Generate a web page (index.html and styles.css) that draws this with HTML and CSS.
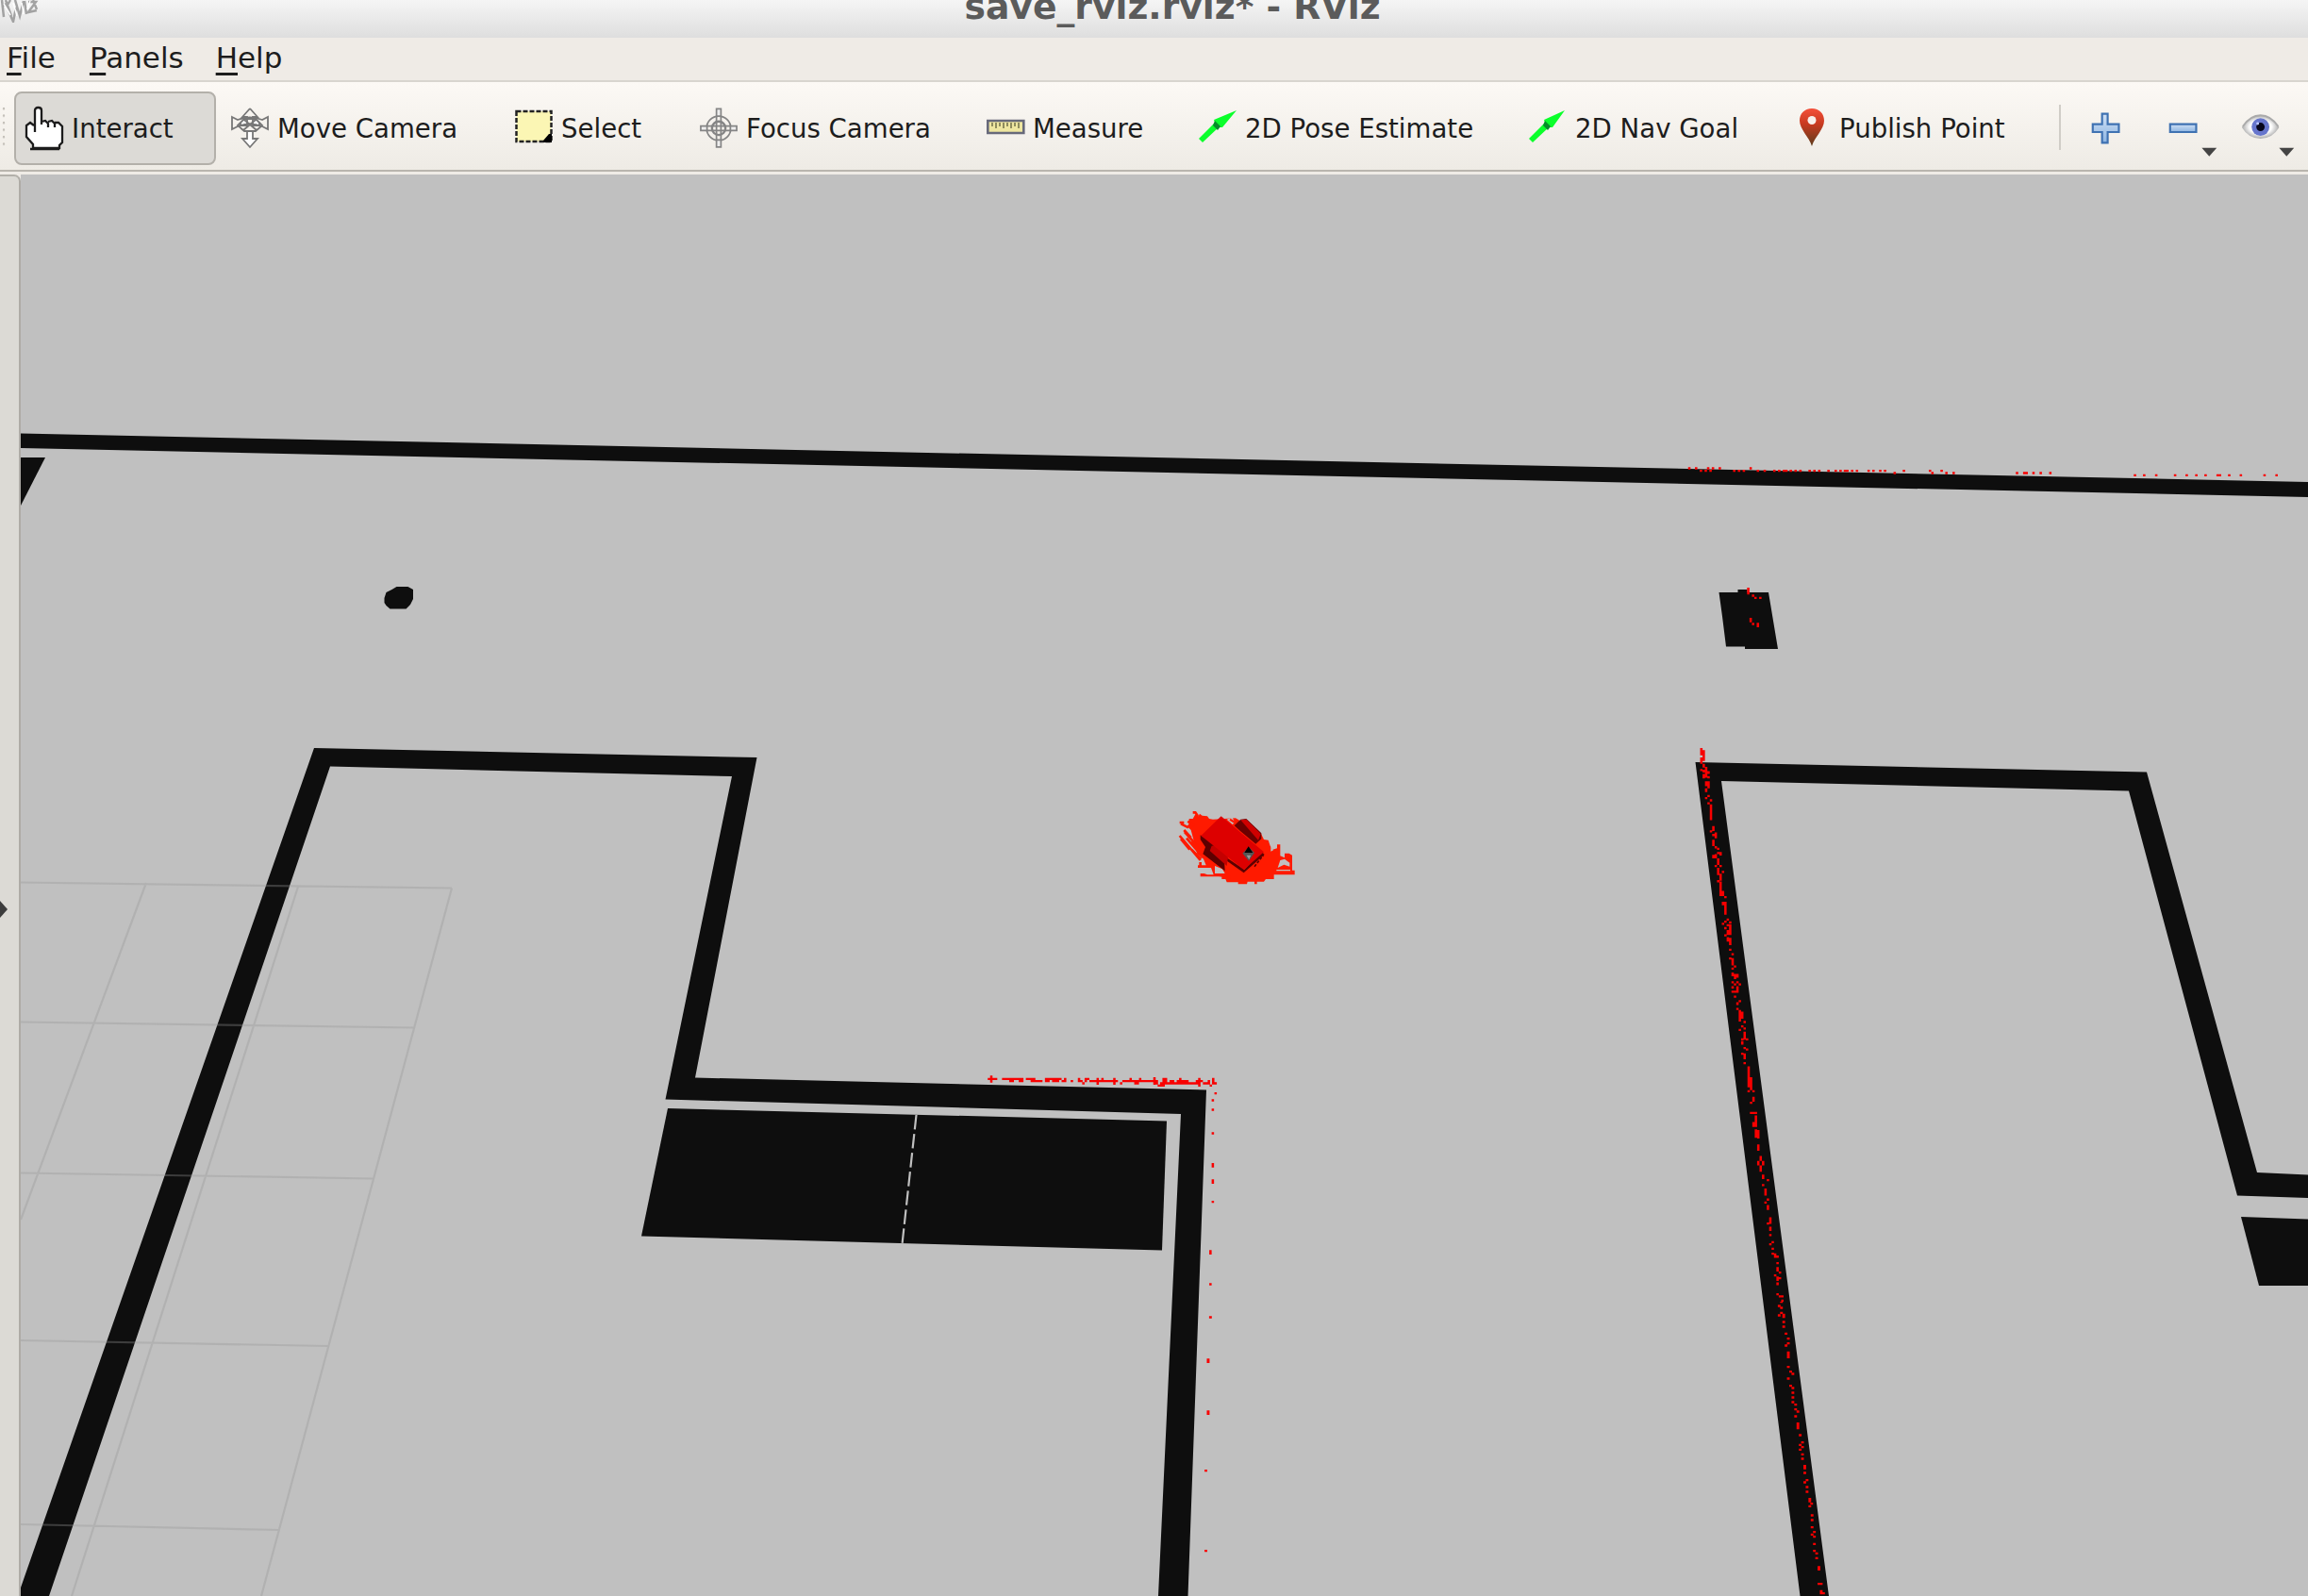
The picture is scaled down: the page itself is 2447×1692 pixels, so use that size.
FILE: index.html
```html
<!DOCTYPE html>
<html lang="en">
<head>
<meta charset="utf-8">
<title>save_rviz.rviz* - RViz</title>
<link rel="stylesheet" href="styles.css">
</head>
<body>
<div class="window">
  <header class="titlebar">
    <svg class="app-icon" width="44" height="24" viewBox="0 0 44 24" fill="none" stroke="#a2a2a2" stroke-width="2.500">
      <path d="M2 0l2 18M6 0l6 17M2 7l6-4M11 0l-4 7 7 16 3-15M16 0l5 17 4-16M26 1l2 14M30 2h8l-8 11 9-2M35 0l4 10"/>
      <path stroke="#fff" stroke-width="1.500" d="M4 4l7 12M14 3l4 14M23 3l2 12M32 1l-3 9"/>
    </svg>
    <h1 class="title">save_rviz.rviz* - RViz</h1>
  </header>

  <nav class="menubar">
    <span class="menu"><span class="key">F</span>ile</span>
    <span class="menu"><span class="key">P</span>anels</span>
    <span class="menu"><span class="key">H</span>elp</span>
  </nav>

  <div class="toolbar">
    <div class="grip"></div>
    <div class="tools">
      <div class="tool active">
        <svg class="icon" viewBox="0 0 40 44"><path d="M9 4q0-3 4-3t4 3v13l3-2q3-1 4 2l3-2q3-1 4 3 3-2 5 0l3 3v17l-3 4v3H9v-4l-7-8V19l3-2 4 2z" fill="#fff"/><path d="M10 27V4q0-3 3.500-3T17 4v15M17 16l4-1 3 3v4M24 16l4-1 3 3v4M31 17l4 0 4 4v17l-3 3v3H8v-4l-7-8V20l4-3 4 3M5 45h31" fill="none" stroke="#1c1c1c" stroke-width="2.300"/></svg>
        <span>Interact</span>
      </div>
      <div class="tool">
        <svg class="icon" viewBox="0 0 40 44"><g fill="#fff" stroke="#777" stroke-width="1.800"><path d="M20 2l8 9h-5v9h7v-3M20 2l-8 9h5v9h-7v-3M17 25v9h-5l8 9 8-9h-5v-9"/><path d="M1 11l6 3q13-5 26 0l6-3v13l-6-3q-13-5-26 0l-6 3z" fill="none"/><path d="M7 20l7-7h12l7 7-7 6H14zM14 14l13 11M26 14L13 25" fill="none"/></g></svg>
        <span>Move Camera</span>
      </div>
      <div class="tool">
        <svg class="icon" viewBox="0 0 40 44"><path d="M1.500 5h37v32h-37z" fill="#fbf6b4" stroke="#222" stroke-width="2.500" stroke-dasharray="5 2"/><path d="M39 29v9h-9v-2l6-7z" fill="#000"/></svg>
        <span>Select</span>
      </div>
      <div class="tool">
        <svg class="icon" viewBox="0 0 42 44"><g fill="none" stroke="#858585" stroke-width="1.800"><circle cx="21" cy="23" r="13.500"/><circle cx="21" cy="23" r="7.500" stroke-width="2.500"/><path d="M18.500 1.500h5v8h-5zM18.500 36h5v8h-5zM1 20.500h7v5H1zM34 20.500h7v5h-7z" fill="#eee"/><path d="M18.500 10v26M23.500 10v26M8 20.500h26M8 25.500h26"/></g></svg>
        <span>Focus Camera</span>
      </div>
      <div class="tool">
        <svg class="icon" viewBox="0 0 40 44"><path d="M1.300 15h38v13h-38z" fill="#eee6a0" stroke="#67697a" stroke-width="2.600"/><path d="M6 17v4M10 17v6M14 17v4M18 17v6M22 17v4M26 17v6M30 17v4M34 17v6" stroke="#77764f" stroke-width="1.600"/></svg>
        <span>Measure</span>
      </div>
      <div class="tool">
        <svg class="icon" viewBox="0 0 40 44"><path d="M0 34l17-17-1-3L40 4 25 22l-4 0L4 38z" fill="#0bff2b"/><path d="M15 20l2-5 6 6-3 4z" fill="#078b2a"/></svg>
        <span>2D Pose Estimate</span>
      </div>
      <div class="tool">
        <svg class="icon" viewBox="0 0 40 44"><path d="M0 34l17-17-1-3L38 4 25 22l-4 0L4 38z" fill="#0bff2b"/><path d="M15 20l2-5 6 6-3 4z" fill="#078b2a"/></svg>
        <span>2D Nav Goal</span>
      </div>
      <div class="tool">
        <svg class="icon" viewBox="0 0 40 44"><defs><linearGradient id="pin" x2="0" y2="1"><stop offset="0" stop-color="#f4503a"/><stop offset=".4" stop-color="#c93a20"/><stop offset="1" stop-color="#5d3c1c"/></linearGradient></defs><path d="M20 2C12 2 7 7.500 7 15c0 9 10 17 13 27 3-10 13-18 13-27C33 7.500 28 2 20 2z" fill="url(#pin)"/><circle cx="20" cy="14.500" r="4.500" fill="#f7f0ec"/></svg>
        <span>Publish Point</span>
      </div>
    </div>
    <div class="separator"></div>
    <div class="actions">
      <svg class="action" viewBox="0 0 84 60"><defs><linearGradient id="blue" x2="0" y2="1"><stop offset="0" stop-color="#cfe0f4"/><stop offset="1" stop-color="#8db5e2"/></linearGradient></defs><path d="M28 12.500h6v11h12v8.500H34v11.500h-6V32H18v-8.500h10z" fill="url(#blue)" stroke="#3f72b2" stroke-width="2.200"/></svg>
      <svg class="action" viewBox="0 0 84 60"><path d="M17 23.500h28v8.500H17z" fill="url(#blue)" stroke="#3f72b2" stroke-width="2.200"/><path d="M51 49h16l-8 9z" fill="#444"/></svg>
      <svg class="action" viewBox="0 0 84 60"><defs><radialGradient id="lid"><stop offset=".6" stop-color="#fbfbfb"/><stop offset="1" stop-color="#aaa"/></radialGradient></defs><path d="M10 27q8-13 20-13t20 13q-7 12-20 12T10 27z" fill="url(#lid)"/><path d="M11 26q8-12 19-12t19 12" fill="none" stroke="#aaa" stroke-width="2"/><circle cx="30" cy="26.500" r="9.500" fill="#6675cc"/><circle cx="30" cy="26.500" r="4.500" fill="#06061c"/><circle cx="27" cy="23" r="1.500" fill="#bfc9ff"/><path d="M50 49h16l-8 9z" fill="#444"/></svg>
    </div>
  </div>

  <main class="workspace">
    <aside class="dock-handle"><div class="dock-arrow"></div></aside>
    <svg class="scene" viewBox="22 185 2425 1507" preserveAspectRatio="none">
      <!-- occupancy map -->
      <g fill="#0e0e0e">
        <path d="M22 459.500L2447 511V527L22 475z"/>
        <path d="M22 485h26L22 536z"/>
        <path d="M407.500 634l2-6 6-3 5-3h12l5.500 3v10l-3 6-4.500 4.500h-17l-4-3.500-2-3z"/>
        <path d="M1822.500 628h20v-3h10v3h22.500l10 60h-35v-2.500h-20l-4-32z"/>
        <path fill-rule="evenodd" d="M333 793L802.500 803 737 1142.500 1279 1155.500 1259.500 1692H1228L1252 1181 705.500 1165.500 776 823 350 812.500 52 1692H22V1683z"/>
        <path d="M708 1175L1237 1188.500 1232 1325.500 680 1310.500z"/>
        <path d="M1797.500 808L2276 818.500 2393 1243 2447 1245.500V1270L2372 1267.500 2257 838.500 1825 828 1939 1692H1908.500z"/>
        <path d="M2376 1290L2447 1292.500V1363H2395z"/>
      </g>
      <path d="M971.500 1182L956.500 1319" stroke="#c0c0c0" stroke-width="2.200" stroke-dasharray="15.500 4.700"/>

      <!-- ground grid -->
      <path class="grid" d="M22 935.500L479 941.500M22 1083.500L439 1089.500M22 1243.500L396 1249.500M22 1421L348 1427M22 1616L296 1622M155 936L22 1293M316 940L76 1692M479 941.500L277 1692"/>

      <!-- laser scan: north wall and pillar -->
      <g class="scan" transform="translate(1780 480) scale(.4253 .3333)">
        <path d="M26 46v7M43 46v7M73 46v7M85 46v7M102 46v7M179 46v7M55 54v7M67 54v7M79 54v7M138 54v7M150 54v7M162 54v7M197 54v7M214 54v7M238 54v7M250 54v7M262 54v7M268 54v7M279 54v7M291 54v7M303 54v7M326 54v7M338 54v7M350 54v7M373 54v7M391 54v7M403 54v7M414 54v7M420 54v7M432 54v7M444 54v7M473 54v7M485 54v7M502 54v7M514 54v7M561 54v7M626 54v7M655 54v7M538 61v7M632 61v7M667 61v7M685 61v7M843 61v7M861 61v7M867 61v7M884 61v7M902 61v7M926 61v7M1137 68v7M1160 68v7M1190 68v7M1237 68v7M1266 68v7M1290 68v7M1313 68v7M1343 68v7M1349 68v7M1372 68v7M1401 68v7M1460 68v7M1490 68v7"/>
        <path d="M173 429v22M185 451v7M191 458v7M203 458v7M179 525v14M185 541v7M197 541v14"/>
      </g>
      <!-- laser scan: inner corner -->
      <g class="scan" transform="translate(660 1120) scale(.4209 .3333)">
        <path d="M929 61v22M941 68v7M935 68v7M923 68v7M959 68v7M965 68v7M971 68v7M977 68v14M983 68v14M989 68v7M995 68v7M1001 68v14M1007 68v14M1019 68v7M1025 68v7M1031 68v14M1037 68v14M1043 75v7M1049 75v7M1055 75v7M1067 68v14M1073 68v14M1079 68v7M1085 68v14M1091 68v14M1097 68v14M1103 68v7M1109 75v7M1115 68v14M1132 75v7M1150 68v14M1156 75v7M1161 82v7M1167 68v14M1173 68v7M1179 75v7M1185 75v7M1191 75v7M1197 68v22M1203 75v7M1209 68v14M1215 75v7M1221 75v7M1227 75v7M1233 75v7M1239 68v22M1245 75v7M1256 82v7M1262 75v7M1268 75v7M1274 75v7M1280 68v14M1286 75v7M1292 75v14M1298 75v14M1304 68v14M1310 75v7M1316 75v7M1322 75v7M1328 75v7M1334 75v7M1340 66v24M1346 75v14M1351 89v7M1357 82v14M1363 68v28M1369 68v14M1369 82v7M1375 82v7M1381 75v14M1387 75v14M1393 82v7M1399 75v14M1405 68v21M1411 75v14M1417 75v14M1423 75v14M1429 82v7M1435 82v7M1441 82v7M1447 75v14M1453 68v28M1459 75v7M1465 82v7M1471 82v7M1477 75v14M1482 89v7M1488 68v21M1494 82v7"/>
        <path d="M1494 114v7M1487 136v7M1487 166v7M1487 241v7M1487 339v14M1487 391v14M1487 459v7M1481 616v14M1481 721v7"/>
      </g>
      <g class="scan" transform="translate(1200 1380) scale(.4847 .3333)">
        <path d="M172 46v7M167 181v14M167 346v14M162 534v7M162 789v7"/>
        <path d="M1421 0v4M1416 10v7M1421 16v7M1421 32v7M1416 40v7M1426 38v14M1426 61v7M1426 76v7M1431 98v7M1436 114v7M1436 129v7M1431 136v7M1436 158v22M1436 204v7M1441 219v7M1446 226v7M1436 241v7M1441 264v7M1446 271v7M1446 286v7M1446 301v7M1446 316v7M1452 324v7M1452 339v7M1457 346v7M1452 361v7M1457 384v22M1462 421v7M1467 444v7M1462 452v7M1467 459v7M1462 467v7M1467 482v7M1467 496v7M1472 519v14M1472 541v7M1477 564v7M1472 571v7M1477 586v7M1477 601v7M1483 624v14M1487 639v7M1483 647v7M1488 676v7M1488 691v7M1488 714v7M1493 729v7M1488 737v7M1493 744v7M1493 767v7M1493 789v7M1498 797v7M1498 812v7M1503 841v14M1503 894v7M1508 894v7M1508 917v14M1513 924v7"/>
      </g>
      <!-- laser scan: corridor wall -->
      <g class="scan" transform="translate(1780 780) scale(.4253 .3827)">
        <path d="M56 34v20M62 40v30M56 60v18M62 78v10M56 92v6M62 94v8M68 86v30M74 98v8M62 106v12M74 112v6M68 126v14M74 126v20M68 146v10M68 170v6M74 164v6M74 184v6M80 176v6M80 190v44M86 250v14M80 262v6M92 268v16M86 272v6M86 288v18M92 306v6M98 310v6M86 330v10M92 328v12M98 322v6M104 322v10M98 340v12M92 358v6M104 358v6M98 352v6M98 366v20M110 374v6M104 382v20M98 400v6M104 404v40M110 430v14M116 444v6M110 460v10M116 460v36M122 506v6M116 512v6M110 518v6M128 514v6M122 522v6M128 522v10M116 530v6M122 538v14M128 532v20M116 550v6M122 558v12M128 560v20M128 590v6M134 602v6M128 614v6M134 616v20M140 636v6M134 642v6M134 656v10M140 660v14M146 660v10M134 680v6M146 680v6M140 686v6M134 694v6M152 686v6M146 694v18M140 706v6M134 706v6M140 720v6M152 732v6M146 738v8M146 754v6M152 760v26M158 764v20M152 786v6M164 790v6M158 802v6M152 812v6M164 808v6M164 820v22M158 838v6M170 838v6M158 846v10M164 862v6M170 866v6M158 878v6M164 880v16M164 904v6M174 916v58M180 946v36M174 982v6M186 982v6M186 1000v14M180 1014v6M180 1042v6M186 1042v6M192 1042v6M192 1052v32M186 1070v14M192 1090v24M198 1092v24M198 1132v18M204 1164v14M198 1178v12M210 1178v12M204 1190v18M210 1216v12M222 1228v6M210 1242v6M216 1254v20M222 1282v6M216 1290v6M222 1300v14M228 1334v18M222 1348v6M228 1360v12M228 1380v6M234 1400v6M228 1406v6M234 1418v6M234 1432v6M240 1434v12M246 1440v6M246 1458v6M246 1472v12M252 1484v6M240 1492v6M246 1498v12M252 1500v6M246 1514v8M246 1544v6M252 1550v6M258 1550v6M258 1562v6"/>
      </g>

      <!-- robot with particle cloud -->
      <g transform="translate(1230 840) scale(.33333)">
        <path fill="#ff1a00" d="M92 84H104L112 70 122 76 126 68 134 74 150 76 156 84 168 86 240 82 320 130 330 150 344 152 350 170 358 182 372 178V166H382V202L396 208V194H410L420 200V248H428V262H362V276H336L330 284H308V292H300V284H278L276 292H248V286H212L208 276H196V268H128V258H140L150 262H170L162 240H120V232H146L138 212 118 196 112 178 106 150 98 120 86 108 92 100z"/>
        <path d="M62 96h14M66 100l24 12M104 64h8l8 12M62 138l66 78M66 148l28 34M84 146l52 60M78 126l40 44M76 120l22 24M88 92l20 14M100 182l30 30M100 156l44 48M128 222v12M184 262l40 8" fill="none" stroke="#ff1a00" stroke-width="8"/>
        <path d="M174 234l24 10 8 14h-32zM382 216l14-4 16 12v12l-18-6-20 10zM370 246h44v4h-44zM212 86l18-6 8 16-8 6zM352 172l8 12-8 4z" fill="#c0c0c0"/>
        <path d="M222 86l16 10" stroke="#ff1a00" stroke-width="7"/>
        <path d="M128 136L188 176 206 204 268 246 322 188 332 198 266 256 204 212 206 250 136 196 144 174 128 150z" fill="#5c0000"/>
        <path d="M164 170L180 168 216 206 212 234 158 186z" fill="#c40000"/>
        <path d="M236 106L256 86 274 84 322 130V148L304 164 254 122z" fill="#6b0000"/>
        <path d="M256 88L274 86 320 132 312 152z" fill="#cf0000"/>
        <path d="M194 76L330 190 266 246 130 138z" fill="#dd0000"/>
        <path d="M262 194l20-20 18 18-18 26z" fill="#555"/><path d="M268 192l13-20 14 20z" fill="#000"/><path d="M275 200h14l-6 14z" fill="#999"/>
        <path d="M300 236l28-36" stroke="#5c0000" stroke-width="5" stroke-dasharray="9 5"/>
      </g>
    </svg>
  </main>
</div>
</body>
</html>
```
FILE: styles.css
```css
* { box-sizing: border-box; }

body {
  margin: 0;
  font-family: "DejaVu Sans", sans-serif;
  color: #1d1d1d;
  background: #efebe6;
}

.window {
  display: flex;
  flex-direction: column;
  width: 2447px;
  height: 1692px;
  overflow: hidden;
}

.titlebar {
  display: grid;
  grid-template-columns: 1022.5px 1fr;
  height: 40px;
  overflow: hidden;
  background: linear-gradient(#f5f5f5, #dedede);
}

.title {
  margin: -15px 0 0;
  font-size: 37.7px;
  line-height: 44px;
  color: #5b5b5b;
  white-space: nowrap;
}

.menubar {
  display: flex;
  gap: 34px;
  height: 47px;
  padding: 2px 0 0 7px;
  border-bottom: 2px solid #d8d5cf;
  font-size: 31px;
  line-height: 38px;
}

.menu:nth-child(2) { margin-left: 2px; }

.key {
  text-decoration: underline;
  text-decoration-thickness: 2.5px;
  text-underline-offset: 4.5px;
  text-decoration-skip-ink: none;
}

.toolbar {
  display: flex;
  height: 95px;
  border-bottom: 2px solid #b9b5ae;
  background: linear-gradient(#fcf9f5, #eeebe5);
}

.toolbar > * { flex: none; }

.grip {
  width: 5px;
  height: 44px;
  margin: 26px 7.5px 0 2px;
  background: radial-gradient(circle at 2px 2px, #c4c0b9 1.2px, transparent 1.6px) 0 0 / 5px 7.5px;
}

.tools {
  display: grid;
  grid-template-columns: 218px 301px 196px 304px 225px 350px 280px 294px;
  padding-top: 10px;
}

.tool {
  display: flex;
  align-items: center;
  gap: 9.5px;
  height: 78px;
  padding-left: 12px;
  font-size: 27.6px;
  white-space: nowrap;
}

.active {
  width: 214px;
  padding-left: 10px;
  border: 2px solid #b3b0aa;
  border-radius: 8px;
  background: #dcdad6;
}

.icon {
  flex: none;
  width: 40px;
  height: 44px;
  margin-top: -3px;
  overflow: visible;
}

.separator {
  width: 2px;
  height: 48px;
  margin: 24px 16px 0 0;
  background: #d0cdc7;
}

.actions {
  display: flex;
  padding-top: 21px;
}

.action {
  width: 83px;
  height: 60px;
}

.workspace {
  display: flex;
  flex: 1;
  padding-top: 3px;
}

.dock-handle {
  display: flex;
  align-items: center;
  width: 22px;
  padding-top: 48px;
  border-top: 2px solid #b3b0aa;
  border-right: 2px solid #aeaba6;
  border-top-right-radius: 7px;
  background: #dcdad5;
}

.dock-arrow {
  border-left: 8px solid #3c3c3c;
  border-top: 9px solid transparent;
  border-bottom: 9px solid transparent;
}

.scene {
  display: block;
  width: 2425px;
  height: 1507px;
  background: #c0c0c0;
}

.grid {
  fill: none;
  stroke: rgb(150 150 150 / 34%);
  stroke-width: 2.2;
}

.scan {
  fill: none;
  stroke: #f80000;
  stroke-width: 6;
}
```
